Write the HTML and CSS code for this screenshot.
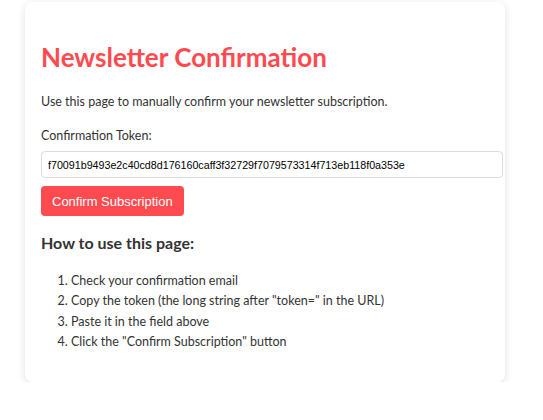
FILE: index.html
```html
<!DOCTYPE html>
<html lang="en">
<head>
<meta charset="utf-8">
<title>Newsletter Confirmation</title>
<link rel="stylesheet" href="styles.css">
</head>
<body>
<main class="card">
  <h1 class="title">Newsletter Confirmation</h1>
  <p class="intro">Use this page to manually confirm your newsletter subscription.</p>
  <form class="form">
    <label class="label" for="token">Confirmation Token:</label>
    <input class="token-input" id="token" type="text" value="f70091b9493e2c40cd8d176160caff3f32729f7079573314f713eb118f0a353e">
    <button class="btn" type="button">Confirm Subscription</button>
  </form>
  <h3 class="howto-title">How to use this page:</h3>
  <ol class="steps">
    <li>Check your confirmation email</li>
    <li>Copy the token (the long string after "token=" in the URL)</li>
    <li>Paste it in the field above</li>
    <li>Click the "Confirm Subscription" button</li>
  </ol>
</main>
</body>
</html>
```
FILE: styles.css
```css
html, body {
  margin: 0;
  background: #ffffff;
}
body {
  padding: 2px 0 0 25px;
  font-family: Lato, "Noto Sans", sans-serif;
  color: #333333;
}
.card {
  width: 480px;
  box-sizing: border-box;
  background: #ffffff;
  border-radius: 8px;
  box-shadow: 0 2px 8px rgba(0, 0, 0, 0.12);
  padding: 38px 16px 29px;
}
.title {
  margin: 0 0 18px;
  font-size: 26px;
  line-height: 34px;
  font-weight: 700;
  color: #ff4a4f;
}
.intro {
  margin: 0 0 14px;
  font-size: 12.5px;
  line-height: 20px;
}
.form {
  display: flex;
  flex-direction: column;
  align-items: flex-start;
}
.label {
  font-size: 12.5px;
  line-height: 20px;
  margin-bottom: 5px;
}
.token-input {
  width: 100%;
  box-sizing: content-box;
  height: 15px;
  padding: 5px 6px;
  border: 1px solid #dddddd;
  border-radius: 4px;
  font-family: "Liberation Sans", Arial, sans-serif;
  font-size: 10.7px;
  color: #000000;
  margin: 0 0 8px;
}
.btn {
  background: #ff4a4f;
  color: #ffffff;
  border: 0;
  border-radius: 4px;
  height: 30px;
  padding: 0 11px;
  font-family: "Liberation Sans", Arial, sans-serif;
  font-size: 13px;
}
.howto-title {
  margin: 17px 0 18px;
  font-size: 16px;
  line-height: 20px;
  font-weight: 700;
}
.steps {
  margin: 0;
  padding-left: 30px;
  font-size: 12.5px;
  line-height: 20.4px;
}
```
